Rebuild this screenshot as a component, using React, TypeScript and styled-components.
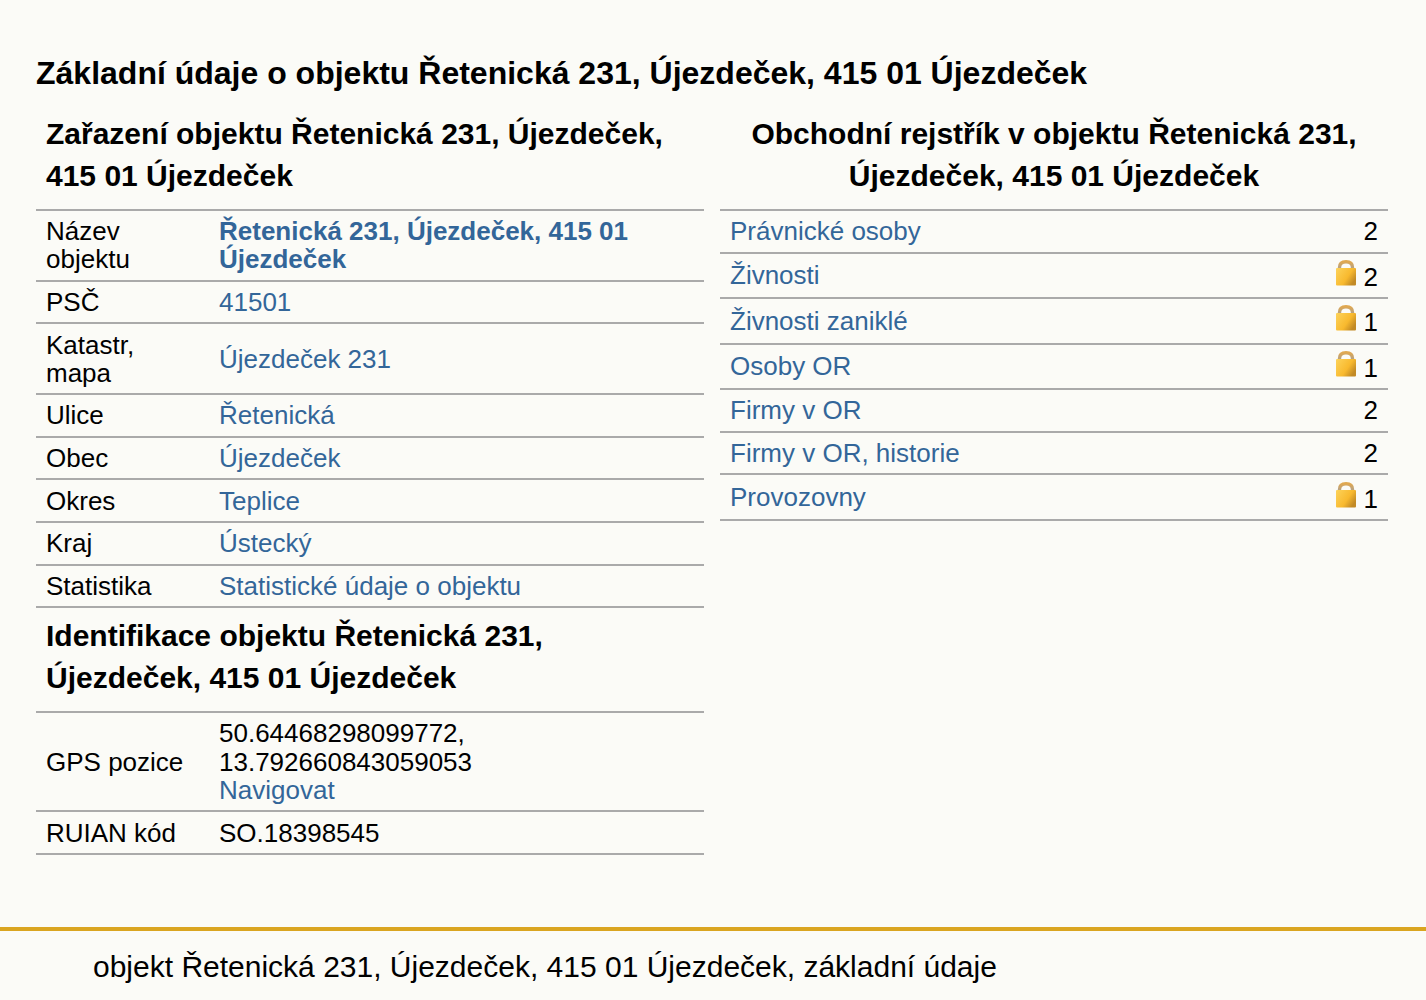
import React from 'react';
import styled, { createGlobalStyle } from 'styled-components';

const GlobalStyle = createGlobalStyle`
    html, body {
        margin: 0;
        padding: 0;
        background: #fbfbf7;
        color: #000;
        font-family: "Liberation Sans", Arial, sans-serif;
        font-size: 26px;
        line-height: 28.3px;
    }
`;

const Main = styled.main`
    padding: 53px 38px 0 36px;
    height: 927px;
    box-sizing: border-box;
`;

const PageTitle = styled.h1`
    margin: 0 0 20px;
    font-size: 32px;
    line-height: 40px;
    font-weight: 700;
`;

const Columns = styled.div`
    display: flex;
    gap: 16px;
    align-items: flex-start;
`;

const Column = styled.section`
    flex: 1 1 0;
    min-width: 0;
`;

const SectionTitle = styled.h2<{ $center?: boolean }>`
    margin: 0;
    padding: 0 10px 12px;
    font-size: 30px;
    line-height: 42px;
    font-weight: 700;
    text-align: ${({ $center }) => ($center ? 'center' : 'left')};
`;

const Table = styled.table`
    width: 100%;
    border-collapse: collapse;
    border-top: 2px solid #aaa;
    margin-bottom: 7px;
`;

const Row = styled.tr`
    border-bottom: 2px solid #aaa;
`;

const Label = styled.td`
    width: 153px;
    padding: 6.15px 10px;
    vertical-align: middle;
`;

const Value = styled.td`
    padding: 6.15px 10px;
    vertical-align: middle;
`;

const Count = styled.td`
    padding: 6.15px 10px;
    text-align: right;
    white-space: nowrap;
`;

const Link = styled.a<{ $strong?: boolean }>`
    color: #336699;
    text-decoration: none;
    font-weight: ${({ $strong }) => ($strong ? 700 : 400)};
`;

const LockIcon = styled.svg`
    width: 22px;
    height: 26px;
    margin-right: 6.5px;
    vertical-align: 0;
`;

const Footer = styled.footer`
    border-top: 4px solid #daa520;
    padding: 18px 0 0 93px;
    font-size: 30px;
    line-height: 36px;
    height: 73px;
    box-sizing: border-box;
`;

const Lock: React.FC = () => (
    <LockIcon viewBox="0 0 22 26" aria-hidden="true">
        <defs>
            <linearGradient id="lockBody" x1="0" y1="0" x2="1" y2="0.6">
                <stop offset="0" stopColor="#fdd35a" />
                <stop offset="0.65" stopColor="#f8b92e" />
                <stop offset="1" stopColor="#c28a25" />
            </linearGradient>
            <linearGradient id="lockShackle" x1="0" y1="0" x2="0" y2="1">
                <stop offset="0" stopColor="#e0a850" />
                <stop offset="1" stopColor="#a89f94" />
            </linearGradient>
        </defs>
        <path d="M4.5 10V7.5C4.5 3.5 7 1.7 11 1.7S17.5 3.5 17.5 7.5V10" fill="none" stroke="url(#lockShackle)" strokeWidth="3.4" />
        <rect x="1" y="8" width="20" height="17.5" rx="1" fill="url(#lockBody)" />
    </LockIcon>
);

const classification = [
    { label: <>Název<br />objektu</>, value: 'Řetenická 231, Újezdeček, 415 01 Újezdeček', strong: true },
    { label: 'PSČ', value: '41501' },
    { label: <>Katastr,<br />mapa</>, value: 'Újezdeček 231' },
    { label: 'Ulice', value: 'Řetenická' },
    { label: 'Obec', value: 'Újezdeček' },
    { label: 'Okres', value: 'Teplice' },
    { label: 'Kraj', value: 'Ústecký' },
    { label: 'Statistika', value: 'Statistické údaje o objektu' },
];

const registry = [
    { name: 'Právnické osoby', count: 2 },
    { name: 'Živnosti', count: 2, locked: true },
    { name: 'Živnosti zaniklé', count: 1, locked: true },
    { name: 'Osoby OR', count: 1, locked: true },
    { name: 'Firmy v OR', count: 2 },
    { name: 'Firmy v OR, historie', count: 2 },
    { name: 'Provozovny', count: 1, locked: true },
];

const App: React.FC = () => (
    <>
        <GlobalStyle />
        <Main>
            <PageTitle>Základní údaje o objektu Řetenická 231, Újezdeček, 415 01 Újezdeček</PageTitle>
            <Columns>
                <Column>
                    <SectionTitle>Zařazení objektu Řetenická 231, Újezdeček, 415 01 Újezdeček</SectionTitle>
                    <Table>
                        <tbody>
                            {classification.map((row, i) => (
                                <Row key={i}>
                                    <Label>{row.label}</Label>
                                    <Value><Link href="#" $strong={row.strong}>{row.value}</Link></Value>
                                </Row>
                            ))}
                        </tbody>
                    </Table>
                    <SectionTitle>Identifikace objektu Řetenická 231,<br />Újezdeček, 415 01 Újezdeček</SectionTitle>
                    <Table>
                        <tbody>
                            <Row>
                                <Label>GPS pozice</Label>
                                <Value>50.64468298099772,<br />13.792660843059053<br /><Link href="#">Navigovat</Link></Value>
                            </Row>
                            <Row>
                                <Label>RUIAN kód</Label>
                                <Value>SO.18398545</Value>
                            </Row>
                        </tbody>
                    </Table>
                </Column>
                <Column>
                    <SectionTitle $center>Obchodní rejstřík v objektu Řetenická 231, Újezdeček, 415 01 Újezdeček</SectionTitle>
                    <Table>
                        <tbody>
                            {registry.map(row => (
                                <Row key={row.name}>
                                    <Value><Link href="#">{row.name}</Link></Value>
                                    <Count>{row.locked && <Lock />}{row.count}</Count>
                                </Row>
                            ))}
                        </tbody>
                    </Table>
                </Column>
            </Columns>
        </Main>
        <Footer>objekt Řetenická 231, Újezdeček, 415 01 Újezdeček, základní údaje</Footer>
    </>
);

export default App;
